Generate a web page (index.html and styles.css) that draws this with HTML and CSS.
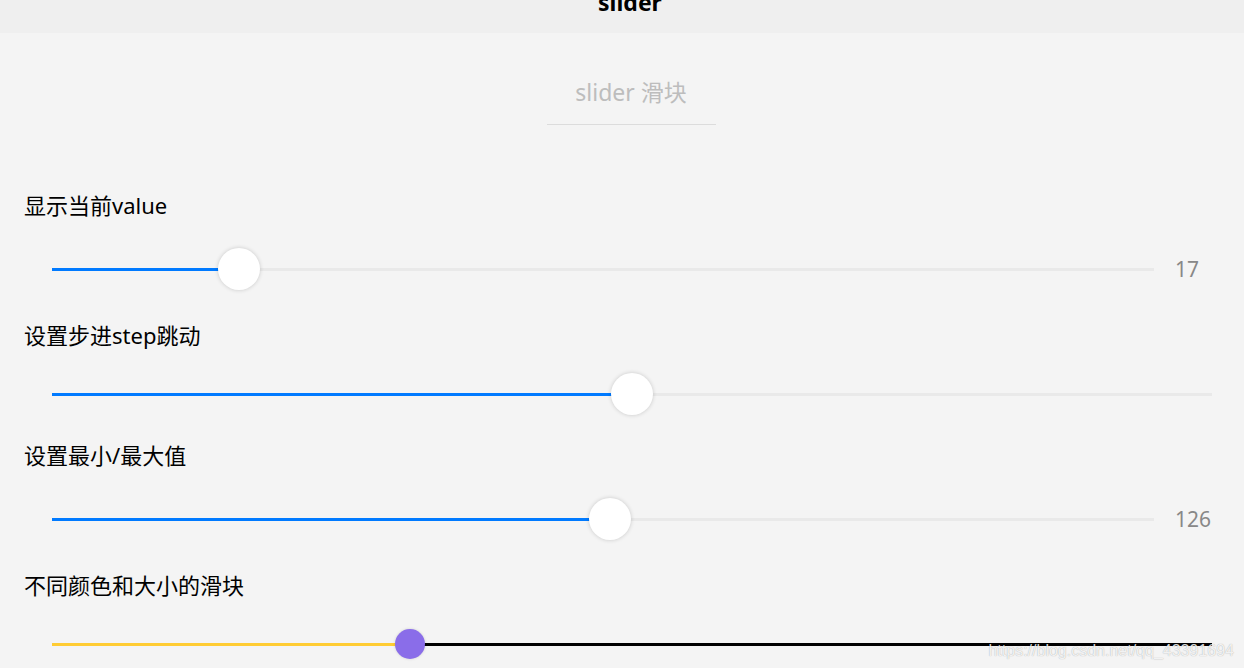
FILE: index.html
```html
<!DOCTYPE html>
<html lang="zh">
<head>
<meta charset="utf-8">
<title>slider</title>
<link rel="stylesheet" href="styles.css">
</head>
<body>
<header class="nav">
  <div class="nav-title">slider</div>
</header>
<main class="page">
  <div class="heading-wrap">
    <div class="heading">slider 滑块</div>
  </div>

  <div class="title">显示当前value</div>
  <div class="slider-row has-value">
    <div class="track">
      <div class="fill" style="width:17%"></div>
      <div class="thumb" style="left:17%"></div>
    </div>
    <div class="value">17</div>
  </div>

  <div class="title">设置步进step跳动</div>
  <div class="slider-row">
    <div class="track">
      <div class="fill" style="width:50%"></div>
      <div class="thumb" style="left:50%"></div>
    </div>
  </div>

  <div class="title">设置最小/最大值</div>
  <div class="slider-row has-value">
    <div class="track">
      <div class="fill" style="width:50.6%"></div>
      <div class="thumb" style="left:50.6%"></div>
    </div>
    <div class="value">126</div>
  </div>

  <div class="title">不同颜色和大小的滑块</div>
  <div class="slider-row">
    <div class="track track-dark">
      <div class="fill fill-yellow" style="width:30.86%"></div>
      <div class="thumb thumb-small" style="left:30.86%"></div>
    </div>
  </div>
</main>
<div class="watermark">https://blog.csdn.net/qq_43391694</div>
</body>
</html>
```

FILE: styles.css
```css
html, body {
  margin: 0;
  padding: 0;
}
body {
  width: 1244px;
  height: 668px;
  overflow: hidden;
  background: #f4f4f4;
  font-family: "Noto Sans", "Noto Sans CJK SC", sans-serif;
  color: #000;
  position: relative;
}
.nav {
  height: 33px;
  background: #efefef;
  overflow: hidden;
  display: flex;
  justify-content: center;
  padding-left: 16px;
}
.nav-title {
  font-size: 23px;
  font-weight: 700;
  line-height: 20px;
  margin-top: -8px;
  color: #000;
}
.page {
  padding: 0 32px 0 24px;
}
.heading-wrap {
  display: flex;
  justify-content: center;
  padding-top: 43px;
  margin-bottom: 65px;
  padding-left: 26px;
}
.heading {
  width: 169px;
  text-align: center;
  font-size: 23px;
  line-height: 32px;
  color: #bdbdbd;
  padding-bottom: 16px;
  border-bottom: 1px solid #dcdcdc;
}
.title {
  font-size: 22px;
  line-height: 30px;
  height: 30px;
}
.slider-row {
  display: flex;
  align-items: center;
  height: 42px;
  padding: 23px 0 25px 28px;
}
.slider-row.has-value {
  padding-top: 28px;
  padding-bottom: 30px;
}
.track {
  position: relative;
  flex: 1;
  height: 3px;
  background: #e9e9e9;
}
.track-dark {
  background: #000;
}
.fill {
  height: 100%;
  background: #007aff;
}
.fill-yellow {
  background: #ffcc33;
}
.thumb {
  position: absolute;
  top: 50%;
  width: 42px;
  height: 42px;
  border-radius: 50%;
  background: #fff;
  box-shadow: 0 0 4px rgba(0, 0, 0, 0.18);
  transform: translate(-50%, -50%);
}
.thumb-small {
  width: 30px;
  height: 30px;
  background: #8a6de9;
  box-shadow: 0 0 3px rgba(0, 0, 0, 0.15);
}
.value {
  width: 37px;
  margin-left: 21px;
  font-size: 21px;
  color: #888;
  line-height: 30px;
}
.watermark {
  position: absolute;
  right: 10px;
  bottom: 8px;
  font-family: "Liberation Sans", Arial, sans-serif;
  font-size: 16px;
  color: rgba(255, 255, 255, 0.85);
  text-shadow: 0 0 1px rgba(0, 0, 0, 0.35);
}
```
